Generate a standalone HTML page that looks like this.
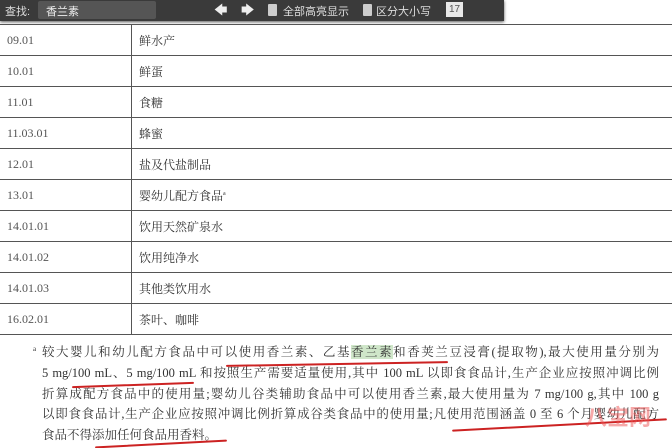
<!DOCTYPE html><html><head><meta charset="utf-8"><style>
body{margin:0;width:672px;height:448px;overflow:hidden;background:#fff;font-family:"Liberation Serif","Noto Serif CJK SC",serif;color:#333;position:relative}
.tb{position:absolute;left:0;top:0;width:504px;height:21px;background:#3a3a3a;box-shadow:0 1px 3px #555;font-family:"Liberation Sans","Noto Sans CJK SC",sans-serif;font-size:11px;color:#ddd;z-index:2}
.tb span{position:absolute;top:3px;white-space:nowrap}
.inp{position:absolute;left:38px;top:1px;width:118px;height:18px;background:#555;border-radius:2px}
.chk{position:absolute;top:4px;width:9px;height:12px;background:#ccc;border-radius:1px}
table{position:absolute;left:-1px;top:24px;width:674px;border-collapse:collapse;font-size:12px}
td{border:1px solid #555;height:30px;padding:0 0 0 7px}
td:first-child{width:124px;color:#555}
.fn{position:absolute;left:42px;top:342px;width:617px;font-size:12.5px;line-height:20.8px;color:#333}
.fn div{text-align:justify;text-align-last:justify;white-space:nowrap;height:20.8px}
.fn div.l{text-align-last:left}
.hl{background:#cfe6c9}
.r{position:absolute;height:2px;background:#c22;border-radius:2px}
</style></head><body>
<div class="tb"><span style="left:5px">查找:</span><div class="inp"></div><span style="left:46px;color:#eee">香兰素</span>
<span style="left:214px;font-size:13px;top:1px;color:#eee">🡄</span><span style="left:241px;font-size:13px;top:1px;color:#eee">🡆</span>
<div class="chk" style="left:268px"></div><span style="left:283px">全部高亮显示</span>
<div class="chk" style="left:363px"></div><span style="left:376px">区分大小写</span>
<div style="position:absolute;left:446px;top:2px;width:17px;height:15px;background:#e8e8e8;color:#555;text-align:center;font:10px/15px 'Liberation Sans',sans-serif">17</div>
</div>
<table>
<tr><td>09.01</td><td>鲜水产</td></tr>
<tr><td>10.01</td><td>鲜蛋</td></tr>
<tr><td>11.01</td><td>食糖</td></tr>
<tr><td>11.03.01</td><td>蜂蜜</td></tr>
<tr><td>12.01</td><td>盐及代盐制品</td></tr>
<tr><td>13.01</td><td>婴幼儿配方食品<sup style="font-size:6px">a</sup></td></tr>
<tr><td>14.01.01</td><td>饮用天然矿泉水</td></tr>
<tr><td>14.01.02</td><td>饮用纯净水</td></tr>
<tr><td>14.01.03</td><td>其他类饮用水</td></tr>
<tr><td>16.02.01</td><td>茶叶、咖啡</td></tr>
</table>
<div class="fn"><span style="position:absolute;left:-9px;top:-3px;font-size:7px">a</span>
<div>较大婴儿和幼儿配方食品中可以使用香兰素、乙基<span class="hl">香兰素</span>和香荚兰豆浸膏(提取物),最大使用量分别为</div>
<div>5 mg/100 mL、5 mg/100 mL 和按照生产需要适量使用,其中 100 mL 以即食食品计,生产企业应按照冲调比例</div>
<div>折算成配方食品中的使用量;婴幼儿谷类辅助食品中可以使用香兰素,最大使用量为 7 mg/100 g,其中 100 g</div>
<div>以即食食品计,生产企业应按照冲调比例折算成谷类食品中的使用量;凡使用范围涵盖 0 至 6 个月婴幼儿配方</div>
<div class="l">食品不得添加任何食品用香料。</div>
</div>
<div class="r" style="left:226px;top:363px;width:222px;transform:rotate(-1deg)"></div>
<div class="r" style="left:72px;top:384px;width:122px;transform:rotate(-2deg)"></div>
<div class="r" style="left:452px;top:424px;width:215px;transform:rotate(-3deg)"></div>
<div class="r" style="left:95px;top:443px;width:132px;transform:rotate(-3deg)"></div>
<div style="position:absolute;left:585px;top:400px;width:76px;height:44px;color:#e55;font:bold 22px 'Liberation Sans','Noto Sans CJK SC',sans-serif;opacity:.5">八宝网</div>
</body></html>
